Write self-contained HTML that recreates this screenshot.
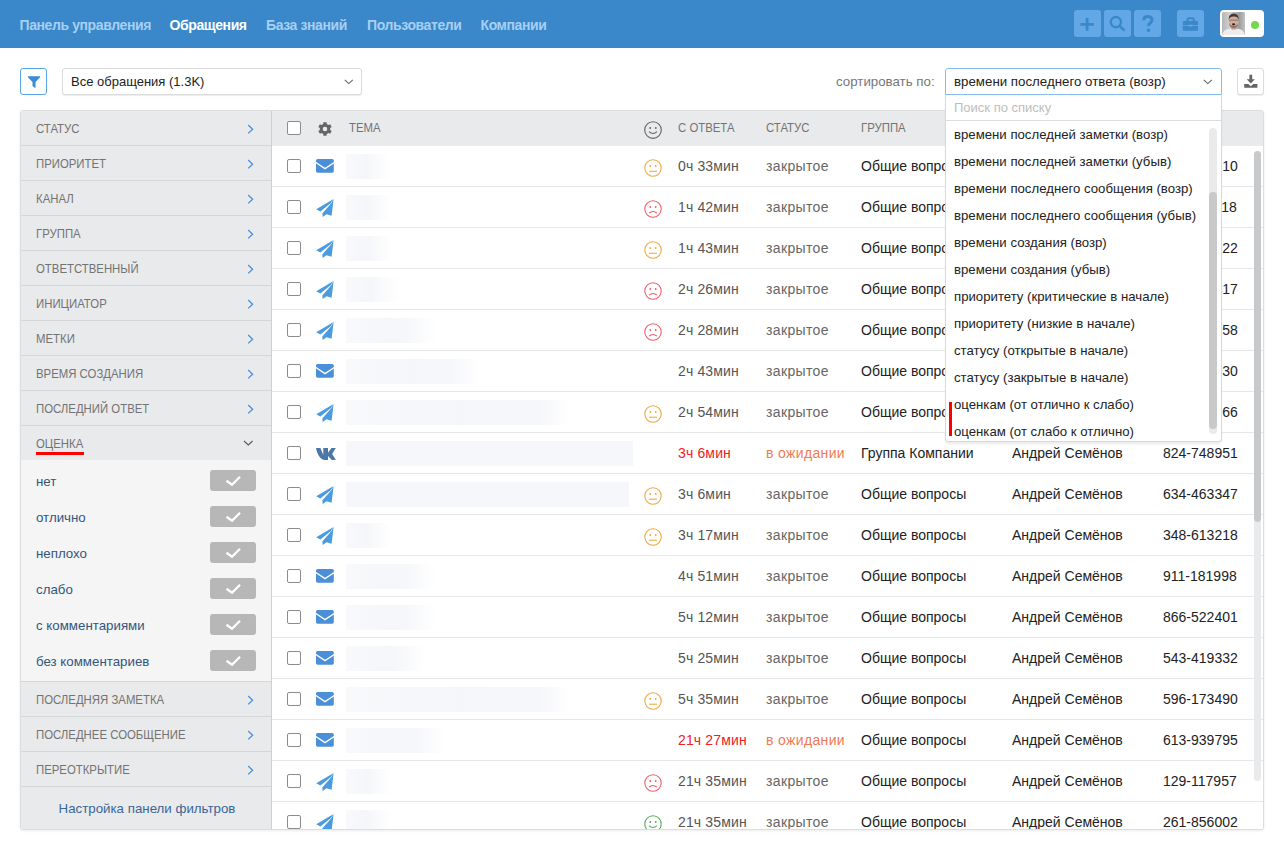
<!DOCTYPE html><html><head><meta charset="utf-8"><style>
*{box-sizing:border-box;margin:0;padding:0}
html,body{width:1284px;height:851px;overflow:hidden;background:#fff;font-family:"Liberation Sans",sans-serif;}
.abs{position:absolute}
svg{position:absolute;display:block;overflow:visible}
#nav{position:absolute;left:0;top:0;width:1284px;height:48px;background:#3a87c9}
#nav .it{position:absolute;top:17px;font-size:14px;font-weight:bold;color:#a6cff3;white-space:nowrap;line-height:16px;letter-spacing:-0.4px}
#nav .it.act{color:#fff}
.nb{position:absolute;top:10px;width:27px;height:27px;background:#63a8e6;border-radius:3px}
.btn{position:absolute;top:68px;height:27px;background:#fff;border:1px solid #dcdcdc;border-radius:3px;box-shadow:0 1px 1px rgba(0,0,0,0.08)}
#panel{position:absolute;left:20px;top:110px;width:1244px;height:720px;border:1px solid #dcdddf;border-radius:3px;box-shadow:0 1px 3px rgba(0,0,0,0.08);overflow:hidden;background:#fff}
#sb{position:absolute;left:0;top:0;width:251px;height:718px;background:#e9eaec;border-right:1px solid #cfd0d2}
.sh{position:absolute;left:0;width:250px;height:35px;border-bottom:1px solid #d5d6d8}
.sh span{position:absolute;left:15px;top:11px;font-size:12.5px;color:#737373;white-space:nowrap;line-height:15px;transform:scaleX(0.91);transform-origin:0 0}
.opt{position:absolute;left:15px;font-size:13.3px;color:#34557b;white-space:nowrap;line-height:15px}
.tg{position:absolute;left:189px;width:46px;height:21px;background:#b7b7b7;border-radius:3px}
#tbl{position:absolute;left:251px;top:0;width:991px;height:718px;overflow:hidden}
.row{position:absolute;left:0;width:991px;height:41px;border-bottom:1px solid #e7e7e7;background:#fff}
.cb{position:absolute;left:15px;top:13px;width:14px;height:14px;border:1px solid #8c8c8c;border-radius:2px;background:#fff}
.c{position:absolute;top:12px;font-size:14px;white-space:nowrap;line-height:16px}
.blur{position:absolute;left:74px;top:8px;height:25px;background:linear-gradient(to right,#f8f9fb 0,#f5f6fa 50%,#f6f7fa calc(100% - 30px),rgba(246,247,250,0) 100%)}
.blur.h{background:#f6f7fa}
.hd{position:absolute;top:10px;font-size:12.5px;color:#737373;white-space:nowrap;line-height:15px;transform:scaleX(0.91);transform-origin:0 0}
#dd{position:absolute;left:945px;top:95px;width:277px;height:347px;background:#fff;border:1px solid #d9d9d9;border-top:none;border-radius:0 0 3px 3px;box-shadow:0 3px 3px -1px rgba(0,0,0,0.09)}
.di{position:absolute;left:8px;font-size:13.2px;color:#222;white-space:nowrap;line-height:15px}
</style></head><body>
<div id="nav">
<div class="it" style="left:19.5px">Панель управления</div>
<div class="it act" style="left:169.5px">Обращения</div>
<div class="it" style="left:266px">База знаний</div>
<div class="it" style="left:367px">Пользователи</div>
<div class="it" style="left:480.5px">Компании</div>
<div class="nb" style="left:1074px"><svg width="27" height="27" viewBox="0 0 27 27"><path d="M6.4 14.3H19.8M13.1 7.8V20.8" stroke="#3a87c9" stroke-width="2.8"/></svg></div>
<div class="nb" style="left:1104px"><svg width="27" height="27" viewBox="0 0 27 27"><circle cx="11.9" cy="12.1" r="5.1" fill="none" stroke="#3a87c9" stroke-width="2.4"/><path d="M15.6 15.9L20.4 20.6" stroke="#3a87c9" stroke-width="2.6"/></svg></div>
<div class="nb" style="left:1134px"><svg width="27" height="27" viewBox="0 0 27 27"><path d="M9.8 10.3C9.8 7.7 11.6 6.5 13.9 6.5C16.4 6.5 18 8 18 9.9C18 12.6 14.8 12.6 14.5 16.2" fill="none" stroke="#3a87c9" stroke-width="3"/><circle cx="14.5" cy="20.2" r="1.8" fill="#3a87c9"/></svg></div>
<div class="nb" style="left:1177px"><svg width="27" height="27" viewBox="0 0 27 27"><path d="M10.5 11V9.2Q10.5 8.2 11.5 8.2H15.8Q16.8 8.2 16.8 9.2V11" fill="none" stroke="#3a87c9" stroke-width="1.9"/><rect x="5.8" y="10.9" width="15.2" height="9.9" rx="1.2" fill="#3a87c9"/><rect x="5.8" y="15.1" width="15.2" height="0.8" fill="#63a8e6"/><rect x="11.8" y="14.6" width="3.6" height="2" fill="#63a8e6"/></svg></div>
<div class="abs" style="left:1220px;top:10px;width:44px;height:27px;background:#fff;border-radius:4px"><svg width="23" height="23" viewBox="0 0 23 23" style="left:2px;top:2px"><defs><linearGradient id="ag" x1="0" x2="1"><stop offset="0" stop-color="#b4b5b7"/><stop offset="0.35" stop-color="#d2d3d5"/><stop offset="0.75" stop-color="#9c9d9f"/><stop offset="1" stop-color="#c2c3c5"/></linearGradient></defs><rect width="23" height="23" rx="1.5" fill="url(#ag)"/><path d="M0.3 23Q0.8 17.8 7 16.8L11.6 17.6L16.2 16.8Q22.2 17.8 22.7 23Z" fill="#ededed"/><rect x="9.6" y="14" width="4" height="3.5" fill="#c49a84"/><ellipse cx="11.6" cy="9.6" rx="4.9" ry="6.3" fill="#d2ae9a"/><path d="M6.6 8.2Q6.4 1.4 11.8 1.4Q17 1.4 16.8 8.2Q16.2 4.3 11.8 4.4Q7.4 4.3 6.6 8.2Z" fill="#4a392f"/><path d="M6.9 11Q7.4 16 11.6 16Q15.8 16 16.3 11Q15.6 13.8 11.6 13.9Q7.8 13.8 6.9 11Z" fill="#8d7061"/><rect x="7" y="7.6" width="9.4" height="1.4" rx="0.7" fill="#6a6a6a" opacity="0.55"/><ellipse cx="11.6" cy="12.3" rx="1.7" ry="1.1" fill="#3a2420"/></svg><div class="abs" style="left:30.8px;top:10.8px;width:8.2px;height:8.2px;border-radius:50%;background:#77d651"></div></div>
</div>
<div class="abs" style="left:20px;top:68px;width:27px;height:27px;border:1px solid #5aa7e8;border-radius:3px;background:#fff"><svg width="27" height="27" viewBox="0 0 27 27" style="left:-1px;top:-1px"><path d="M7.9 8.2H20.1V9.3L15.5 14V20.3L12.5 17.9V14L7.9 9.3Z" fill="#3a8ad6"/></svg></div>
<div class="btn" style="left:62px;width:300px"><div class="abs" style="left:8px;top:5px;font-size:13px;line-height:15px;color:#222;white-space:nowrap">Все обращения (1.3K)</div><svg width="10" height="6" style="left:281px;top:10px"><path d="M0.8 0.8L4.8 4.6L8.8 0.8" fill="none" stroke="#666" stroke-width="1.1"/></svg></div>
<div class="abs" style="left:836px;top:74px;font-size:13.3px;line-height:15px;color:#777;white-space:nowrap">сортировать по:</div>
<div class="btn" style="left:945px;width:277px;border-color:#86bdef;box-shadow:none;border-radius:3px 3px 0 0"><div class="abs" style="left:8px;top:5px;font-size:13.3px;line-height:15px;color:#222;white-space:nowrap">времени последнего ответа (возр)</div><svg width="10" height="6" style="left:257.3px;top:9.6px"><path d="M0.8 0.8L4.8 4.6L8.8 0.8" fill="none" stroke="#666" stroke-width="1.1"/></svg></div>
<div class="btn" style="left:1237px;width:27px"><svg width="27" height="27" viewBox="0 0 27 27" style="left:-1px;top:-1px"><path d="M12.4 6.8H15.2V11.2H17.9L13.8 15.4L9.7 11.2H12.4Z" fill="#666"/><path d="M7.2 15.9H11.3L13.8 18.2L16.3 15.9H20.4V19.8H7.2Z" fill="#666"/></svg></div>
<div id="panel">
<div id="sb">
<div class="sh" style="top:0px"><span>СТАТУС</span><svg width="8" height="11" style="left:226px;top:13px"><path d="M1.2 1L5.6 5.2L1.2 9.4" fill="none" stroke="#4a8fdc" stroke-width="1.3"/></svg></div>
<div class="sh" style="top:35px"><span>ПРИОРИТЕТ</span><svg width="8" height="11" style="left:226px;top:13px"><path d="M1.2 1L5.6 5.2L1.2 9.4" fill="none" stroke="#4a8fdc" stroke-width="1.3"/></svg></div>
<div class="sh" style="top:70px"><span>КАНАЛ</span><svg width="8" height="11" style="left:226px;top:13px"><path d="M1.2 1L5.6 5.2L1.2 9.4" fill="none" stroke="#4a8fdc" stroke-width="1.3"/></svg></div>
<div class="sh" style="top:105px"><span>ГРУППА</span><svg width="8" height="11" style="left:226px;top:13px"><path d="M1.2 1L5.6 5.2L1.2 9.4" fill="none" stroke="#4a8fdc" stroke-width="1.3"/></svg></div>
<div class="sh" style="top:140px"><span>ОТВЕТСТВЕННЫЙ</span><svg width="8" height="11" style="left:226px;top:13px"><path d="M1.2 1L5.6 5.2L1.2 9.4" fill="none" stroke="#4a8fdc" stroke-width="1.3"/></svg></div>
<div class="sh" style="top:175px"><span>ИНИЦИАТОР</span><svg width="8" height="11" style="left:226px;top:13px"><path d="M1.2 1L5.6 5.2L1.2 9.4" fill="none" stroke="#4a8fdc" stroke-width="1.3"/></svg></div>
<div class="sh" style="top:210px"><span>МЕТКИ</span><svg width="8" height="11" style="left:226px;top:13px"><path d="M1.2 1L5.6 5.2L1.2 9.4" fill="none" stroke="#4a8fdc" stroke-width="1.3"/></svg></div>
<div class="sh" style="top:245px"><span>ВРЕМЯ СОЗДАНИЯ</span><svg width="8" height="11" style="left:226px;top:13px"><path d="M1.2 1L5.6 5.2L1.2 9.4" fill="none" stroke="#4a8fdc" stroke-width="1.3"/></svg></div>
<div class="sh" style="top:280px"><span>ПОСЛЕДНИЙ ОТВЕТ</span><svg width="8" height="11" style="left:226px;top:13px"><path d="M1.2 1L5.6 5.2L1.2 9.4" fill="none" stroke="#4a8fdc" stroke-width="1.3"/></svg></div>
<div class="sh" style="top:315px;height:34px;border-bottom:none"><span>ОЦЕНКА</span><svg width="11" height="7" style="left:221.8px;top:13.5px"><path d="M1 1L5.3 5L9.6 1" fill="none" stroke="#5a5a5a" stroke-width="1.1"/></svg></div>
<div class="abs" style="left:15px;top:341px;width:48px;height:3px;background:#fe0000"></div>
<div class="abs" style="left:0;top:349px;width:250px;height:222px;background:#f5f5f6;border-bottom:1px solid #d5d6d8">
<div class="opt" style="top:14px">нет</div>
<div class="tg" style="top:10px"><svg width="46" height="21"><path d="M16.5 10.8L22 14.8L30 6.7" fill="none" stroke="#fff" stroke-width="2.3"/></svg></div>
<div class="opt" style="top:50px">отлично</div>
<div class="tg" style="top:46px"><svg width="46" height="21"><path d="M16.5 10.8L22 14.8L30 6.7" fill="none" stroke="#fff" stroke-width="2.3"/></svg></div>
<div class="opt" style="top:86px">неплохо</div>
<div class="tg" style="top:82px"><svg width="46" height="21"><path d="M16.5 10.8L22 14.8L30 6.7" fill="none" stroke="#fff" stroke-width="2.3"/></svg></div>
<div class="opt" style="top:122px">слабо</div>
<div class="tg" style="top:118px"><svg width="46" height="21"><path d="M16.5 10.8L22 14.8L30 6.7" fill="none" stroke="#fff" stroke-width="2.3"/></svg></div>
<div class="opt" style="top:158px">с комментариями</div>
<div class="tg" style="top:154px"><svg width="46" height="21"><path d="M16.5 10.8L22 14.8L30 6.7" fill="none" stroke="#fff" stroke-width="2.3"/></svg></div>
<div class="opt" style="top:194px">без комментариев</div>
<div class="tg" style="top:190px"><svg width="46" height="21"><path d="M16.5 10.8L22 14.8L30 6.7" fill="none" stroke="#fff" stroke-width="2.3"/></svg></div>
</div>
<div class="sh" style="top:571px"><span>ПОСЛЕДНЯЯ ЗАМЕТКА</span><svg width="8" height="11" style="left:226px;top:13px"><path d="M1.2 1L5.6 5.2L1.2 9.4" fill="none" stroke="#4a8fdc" stroke-width="1.3"/></svg></div>
<div class="sh" style="top:606px"><span>ПОСЛЕДНЕЕ СООБЩЕНИЕ</span><svg width="8" height="11" style="left:226px;top:13px"><path d="M1.2 1L5.6 5.2L1.2 9.4" fill="none" stroke="#4a8fdc" stroke-width="1.3"/></svg></div>
<div class="sh" style="top:641px"><span>ПЕРЕОТКРЫТИЕ</span><svg width="8" height="11" style="left:226px;top:13px"><path d="M1.2 1L5.6 5.2L1.2 9.4" fill="none" stroke="#4a8fdc" stroke-width="1.3"/></svg></div>
<div class="abs" style="left:0;top:690px;left:1px;width:250px;text-align:center;font-size:13.3px;line-height:15px;color:#3b6697;white-space:nowrap">Настройка панели фильтров</div>
</div>
<div id="tbl">
<div class="abs" style="left:0;top:0;width:991px;height:35px;background:#e9eaec">
<div class="cb" style="top:10px"></div>
<svg width="16" height="16" viewBox="0 0 16 16" style="left:45px;top:10px"><path fill="#666" fill-rule="evenodd" d="M5.40 3.50 L6.22 3.12 L6.40 1.18 L9.60 1.18 L9.78 3.12 L10.60 3.50 L11.34 4.01 L13.10 3.21 L14.70 5.97 L13.12 7.10 L13.20 8.00 L13.12 8.90 L14.70 10.03 L13.10 12.79 L11.34 11.99 L10.60 12.50 L9.78 12.88 L9.60 14.82 L6.40 14.82 L6.22 12.88 L5.40 12.50 L4.66 11.99 L2.90 12.79 L1.30 10.03 L2.88 8.90 L2.80 8.00 L2.88 7.10 L1.30 5.97 L2.90 3.21 L4.66 4.01ZM10.30 8.00A2.3 2.3 0 1 0 5.70 8.00A2.3 2.3 0 1 0 10.30 8.00Z"/></svg>
<div class="hd" style="left:77px">ТЕМА</div>
<svg width="20" height="20" viewBox="0 0 20 20" style="left:371px;top:8.5px"><circle cx="10" cy="10" r="8.3" fill="none" stroke="#666" stroke-width="1.15"/><circle cx="7.2" cy="8" r="0.95" fill="#666"/><circle cx="12.8" cy="8" r="0.95" fill="#666"/><path d="M6 11.6Q10 15.4 14 11.6" fill="none" stroke="#666" stroke-width="1.15"/></svg>
<div class="hd" style="left:406px">С ОТВЕТА</div>
<div class="hd" style="left:494px">СТАТУС</div>
<div class="hd" style="left:589px">ГРУППА</div>
</div>
<div class="row" style="top:35px"><div class="cb"></div><svg width="18" height="14" viewBox="0 0 18 14" style="left:44.2px;top:13.2px"><rect x="0" y="0" width="17.8" height="13.7" rx="1.6" fill="#4a8fd8"/><path d="M-0.5 3.3L9 9.6L18.3 3.5" fill="none" stroke="#fff" stroke-width="1.3"/></svg><div class="blur" style="width:44px"></div><svg width="20" height="20" viewBox="0 0 20 20" style="left:371px;top:12px"><circle cx="10" cy="10" r="8.2" fill="none" stroke="#eea53a" stroke-width="1.05"/><circle cx="7.3" cy="8" r="0.9" fill="#eea53a"/><circle cx="12.7" cy="8" r="0.9" fill="#eea53a"/><path d="M6 13.2H14" stroke="#eea53a" stroke-width="1.05"/></svg><div class="c" style="left:406px;color:#555;letter-spacing:0.15px">0ч 33мин</div><div class="c" style="left:494px;color:#666;letter-spacing:0.35px">закрытое</div><div class="c" style="left:589px;color:#222">Общие вопросы</div><div class="c" style="left:740px;color:#222">Андрей Семёнов</div><div class="c" style="left:891px;color:#222">514-327510</div></div>
<div class="row" style="top:76px"><div class="cb"></div><svg width="20" height="20" viewBox="0 0 20 20" style="left:42px;top:11px"><path d="M19.6 1L2.2 11.3L6.3 13.6L16.6 5.2Z" fill="#4b9be0"/><path d="M19.6 1L17.3 5.2L8.3 15.4L8.7 18.9L12.5 16.3L17.6 17.7Z" fill="#4b9be0"/></svg><div class="blur" style="width:46px"></div><svg width="20" height="20" viewBox="0 0 20 20" style="left:371px;top:12px"><circle cx="10" cy="10" r="8.2" fill="none" stroke="#ef5a66" stroke-width="1.05"/><circle cx="7.3" cy="8" r="0.9" fill="#ef5a66"/><circle cx="12.7" cy="8" r="0.9" fill="#ef5a66"/><path d="M6 14.2Q10 10.8 14 14.2" fill="none" stroke="#ef5a66" stroke-width="1.05"/></svg><div class="c" style="left:406px;color:#555;letter-spacing:0.15px">1ч 42мин</div><div class="c" style="left:494px;color:#666;letter-spacing:0.35px">закрытое</div><div class="c" style="left:589px;color:#222">Общие вопросы</div><div class="c" style="left:740px;color:#222">Андрей Семёнов</div><div class="c" style="left:891px;color:#222">372-904118</div></div>
<div class="row" style="top:117px"><div class="cb"></div><svg width="20" height="20" viewBox="0 0 20 20" style="left:42px;top:11px"><path d="M19.6 1L2.2 11.3L6.3 13.6L16.6 5.2Z" fill="#4b9be0"/><path d="M19.6 1L17.3 5.2L8.3 15.4L8.7 18.9L12.5 16.3L17.6 17.7Z" fill="#4b9be0"/></svg><div class="blur" style="width:47px"></div><svg width="20" height="20" viewBox="0 0 20 20" style="left:371px;top:12px"><circle cx="10" cy="10" r="8.2" fill="none" stroke="#eea53a" stroke-width="1.05"/><circle cx="7.3" cy="8" r="0.9" fill="#eea53a"/><circle cx="12.7" cy="8" r="0.9" fill="#eea53a"/><path d="M6 13.2H14" stroke="#eea53a" stroke-width="1.05"/></svg><div class="c" style="left:406px;color:#555;letter-spacing:0.15px">1ч 43мин</div><div class="c" style="left:494px;color:#666;letter-spacing:0.35px">закрытое</div><div class="c" style="left:589px;color:#222">Общие вопросы</div><div class="c" style="left:740px;color:#222">Андрей Семёнов</div><div class="c" style="left:891px;color:#222">245-668322</div></div>
<div class="row" style="top:158px"><div class="cb"></div><svg width="20" height="20" viewBox="0 0 20 20" style="left:42px;top:11px"><path d="M19.6 1L2.2 11.3L6.3 13.6L16.6 5.2Z" fill="#4b9be0"/><path d="M19.6 1L17.3 5.2L8.3 15.4L8.7 18.9L12.5 16.3L17.6 17.7Z" fill="#4b9be0"/></svg><div class="blur" style="width:53px"></div><svg width="20" height="20" viewBox="0 0 20 20" style="left:371px;top:12px"><circle cx="10" cy="10" r="8.2" fill="none" stroke="#ef5a66" stroke-width="1.05"/><circle cx="7.3" cy="8" r="0.9" fill="#ef5a66"/><circle cx="12.7" cy="8" r="0.9" fill="#ef5a66"/><path d="M6 14.2Q10 10.8 14 14.2" fill="none" stroke="#ef5a66" stroke-width="1.05"/></svg><div class="c" style="left:406px;color:#555;letter-spacing:0.15px">2ч 26мин</div><div class="c" style="left:494px;color:#666;letter-spacing:0.35px">закрытое</div><div class="c" style="left:589px;color:#222">Общие вопросы</div><div class="c" style="left:740px;color:#222">Андрей Семёнов</div><div class="c" style="left:891px;color:#222">683-120417</div></div>
<div class="row" style="top:199px"><div class="cb"></div><svg width="20" height="20" viewBox="0 0 20 20" style="left:42px;top:11px"><path d="M19.6 1L2.2 11.3L6.3 13.6L16.6 5.2Z" fill="#4b9be0"/><path d="M19.6 1L17.3 5.2L8.3 15.4L8.7 18.9L12.5 16.3L17.6 17.7Z" fill="#4b9be0"/></svg><div class="blur" style="width:90px"></div><svg width="20" height="20" viewBox="0 0 20 20" style="left:371px;top:12px"><circle cx="10" cy="10" r="8.2" fill="none" stroke="#ef5a66" stroke-width="1.05"/><circle cx="7.3" cy="8" r="0.9" fill="#ef5a66"/><circle cx="12.7" cy="8" r="0.9" fill="#ef5a66"/><path d="M6 14.2Q10 10.8 14 14.2" fill="none" stroke="#ef5a66" stroke-width="1.05"/></svg><div class="c" style="left:406px;color:#555;letter-spacing:0.15px">2ч 28мин</div><div class="c" style="left:494px;color:#666;letter-spacing:0.35px">закрытое</div><div class="c" style="left:589px;color:#222">Общие вопросы</div><div class="c" style="left:740px;color:#222">Андрей Семёнов</div><div class="c" style="left:891px;color:#222">901-554758</div></div>
<div class="row" style="top:240px"><div class="cb"></div><svg width="18" height="14" viewBox="0 0 18 14" style="left:44.2px;top:13.2px"><rect x="0" y="0" width="17.8" height="13.7" rx="1.6" fill="#4a8fd8"/><path d="M-0.5 3.3L9 9.6L18.3 3.5" fill="none" stroke="#fff" stroke-width="1.3"/></svg><div class="blur" style="width:135px"></div><div class="c" style="left:406px;color:#555;letter-spacing:0.15px">2ч 43мин</div><div class="c" style="left:494px;color:#666;letter-spacing:0.35px">закрытое</div><div class="c" style="left:589px;color:#222">Общие вопросы</div><div class="c" style="left:740px;color:#222">Андрей Семёнов</div><div class="c" style="left:891px;color:#222">437-281930</div></div>
<div class="row" style="top:281px"><div class="cb"></div><svg width="20" height="20" viewBox="0 0 20 20" style="left:42px;top:11px"><path d="M19.6 1L2.2 11.3L6.3 13.6L16.6 5.2Z" fill="#4b9be0"/><path d="M19.6 1L17.3 5.2L8.3 15.4L8.7 18.9L12.5 16.3L17.6 17.7Z" fill="#4b9be0"/></svg><div class="blur" style="width:224px"></div><svg width="20" height="20" viewBox="0 0 20 20" style="left:371px;top:12px"><circle cx="10" cy="10" r="8.2" fill="none" stroke="#eea53a" stroke-width="1.05"/><circle cx="7.3" cy="8" r="0.9" fill="#eea53a"/><circle cx="12.7" cy="8" r="0.9" fill="#eea53a"/><path d="M6 13.2H14" stroke="#eea53a" stroke-width="1.05"/></svg><div class="c" style="left:406px;color:#555;letter-spacing:0.15px">2ч 54мин</div><div class="c" style="left:494px;color:#666;letter-spacing:0.35px">закрытое</div><div class="c" style="left:589px;color:#222">Общие вопросы</div><div class="c" style="left:740px;color:#222">Андрей Семёнов</div><div class="c" style="left:891px;color:#222">819-036266</div></div>
<div class="row" style="top:322px"><div class="cb"></div><svg width="21" height="13" viewBox="0 0 21 13" style="left:44.2px;top:14.9px"><path fill="#4a76a8" d="M0 0H4.4L7.3 6.9V0H12V4.8L15.5 0H19.8L16.1 6.1L19.9 12H15.9L12 8V12H8.9C4.7 12 1.3 6.6 0 0Z"/></svg><div class="blur h" style="width:287px"></div><div class="c" style="left:406px;color:#f0201e;letter-spacing:0.15px">3ч 6мин</div><div class="c" style="left:494px;color:#f07a52;letter-spacing:0.35px">в ожидании</div><div class="c" style="left:589px;color:#222">Группа Компании</div><div class="c" style="left:740px;color:#222">Андрей Семёнов</div><div class="c" style="left:891px;color:#222">824-748951</div></div>
<div class="row" style="top:363px"><div class="cb"></div><svg width="20" height="20" viewBox="0 0 20 20" style="left:42px;top:11px"><path d="M19.6 1L2.2 11.3L6.3 13.6L16.6 5.2Z" fill="#4b9be0"/><path d="M19.6 1L17.3 5.2L8.3 15.4L8.7 18.9L12.5 16.3L17.6 17.7Z" fill="#4b9be0"/></svg><div class="blur h" style="width:283px"></div><svg width="20" height="20" viewBox="0 0 20 20" style="left:371px;top:12px"><circle cx="10" cy="10" r="8.2" fill="none" stroke="#eea53a" stroke-width="1.05"/><circle cx="7.3" cy="8" r="0.9" fill="#eea53a"/><circle cx="12.7" cy="8" r="0.9" fill="#eea53a"/><path d="M6 13.2H14" stroke="#eea53a" stroke-width="1.05"/></svg><div class="c" style="left:406px;color:#555;letter-spacing:0.15px">3ч 6мин</div><div class="c" style="left:494px;color:#666;letter-spacing:0.35px">закрытое</div><div class="c" style="left:589px;color:#222">Общие вопросы</div><div class="c" style="left:740px;color:#222">Андрей Семёнов</div><div class="c" style="left:891px;color:#222">634-463347</div></div>
<div class="row" style="top:404px"><div class="cb"></div><svg width="20" height="20" viewBox="0 0 20 20" style="left:42px;top:11px"><path d="M19.6 1L2.2 11.3L6.3 13.6L16.6 5.2Z" fill="#4b9be0"/><path d="M19.6 1L17.3 5.2L8.3 15.4L8.7 18.9L12.5 16.3L17.6 17.7Z" fill="#4b9be0"/></svg><div class="blur" style="width:44px"></div><svg width="20" height="20" viewBox="0 0 20 20" style="left:371px;top:12px"><circle cx="10" cy="10" r="8.2" fill="none" stroke="#eea53a" stroke-width="1.05"/><circle cx="7.3" cy="8" r="0.9" fill="#eea53a"/><circle cx="12.7" cy="8" r="0.9" fill="#eea53a"/><path d="M6 13.2H14" stroke="#eea53a" stroke-width="1.05"/></svg><div class="c" style="left:406px;color:#555;letter-spacing:0.15px">3ч 17мин</div><div class="c" style="left:494px;color:#666;letter-spacing:0.35px">закрытое</div><div class="c" style="left:589px;color:#222">Общие вопросы</div><div class="c" style="left:740px;color:#222">Андрей Семёнов</div><div class="c" style="left:891px;color:#222">348-613218</div></div>
<div class="row" style="top:445px"><div class="cb"></div><svg width="18" height="14" viewBox="0 0 18 14" style="left:44.2px;top:13.2px"><rect x="0" y="0" width="17.8" height="13.7" rx="1.6" fill="#4a8fd8"/><path d="M-0.5 3.3L9 9.6L18.3 3.5" fill="none" stroke="#fff" stroke-width="1.3"/></svg><div class="blur" style="width:90px"></div><div class="c" style="left:406px;color:#555;letter-spacing:0.15px">4ч 51мин</div><div class="c" style="left:494px;color:#666;letter-spacing:0.35px">закрытое</div><div class="c" style="left:589px;color:#222">Общие вопросы</div><div class="c" style="left:740px;color:#222">Андрей Семёнов</div><div class="c" style="left:891px;color:#222">911-181998</div></div>
<div class="row" style="top:486px"><div class="cb"></div><svg width="18" height="14" viewBox="0 0 18 14" style="left:44.2px;top:13.2px"><rect x="0" y="0" width="17.8" height="13.7" rx="1.6" fill="#4a8fd8"/><path d="M-0.5 3.3L9 9.6L18.3 3.5" fill="none" stroke="#fff" stroke-width="1.3"/></svg><div class="blur" style="width:90px"></div><div class="c" style="left:406px;color:#555;letter-spacing:0.15px">5ч 12мин</div><div class="c" style="left:494px;color:#666;letter-spacing:0.35px">закрытое</div><div class="c" style="left:589px;color:#222">Общие вопросы</div><div class="c" style="left:740px;color:#222">Андрей Семёнов</div><div class="c" style="left:891px;color:#222">866-522401</div></div>
<div class="row" style="top:527px"><div class="cb"></div><svg width="18" height="14" viewBox="0 0 18 14" style="left:44.2px;top:13.2px"><rect x="0" y="0" width="17.8" height="13.7" rx="1.6" fill="#4a8fd8"/><path d="M-0.5 3.3L9 9.6L18.3 3.5" fill="none" stroke="#fff" stroke-width="1.3"/></svg><div class="blur" style="width:80px"></div><div class="c" style="left:406px;color:#555;letter-spacing:0.15px">5ч 25мин</div><div class="c" style="left:494px;color:#666;letter-spacing:0.35px">закрытое</div><div class="c" style="left:589px;color:#222">Общие вопросы</div><div class="c" style="left:740px;color:#222">Андрей Семёнов</div><div class="c" style="left:891px;color:#222">543-419332</div></div>
<div class="row" style="top:568px"><div class="cb"></div><svg width="18" height="14" viewBox="0 0 18 14" style="left:44.2px;top:13.2px"><rect x="0" y="0" width="17.8" height="13.7" rx="1.6" fill="#4a8fd8"/><path d="M-0.5 3.3L9 9.6L18.3 3.5" fill="none" stroke="#fff" stroke-width="1.3"/></svg><div class="blur" style="width:224px"></div><svg width="20" height="20" viewBox="0 0 20 20" style="left:371px;top:12px"><circle cx="10" cy="10" r="8.2" fill="none" stroke="#eea53a" stroke-width="1.05"/><circle cx="7.3" cy="8" r="0.9" fill="#eea53a"/><circle cx="12.7" cy="8" r="0.9" fill="#eea53a"/><path d="M6 13.2H14" stroke="#eea53a" stroke-width="1.05"/></svg><div class="c" style="left:406px;color:#555;letter-spacing:0.15px">5ч 35мин</div><div class="c" style="left:494px;color:#666;letter-spacing:0.35px">закрытое</div><div class="c" style="left:589px;color:#222">Общие вопросы</div><div class="c" style="left:740px;color:#222">Андрей Семёнов</div><div class="c" style="left:891px;color:#222">596-173490</div></div>
<div class="row" style="top:609px"><div class="cb"></div><svg width="18" height="14" viewBox="0 0 18 14" style="left:44.2px;top:13.2px"><rect x="0" y="0" width="17.8" height="13.7" rx="1.6" fill="#4a8fd8"/><path d="M-0.5 3.3L9 9.6L18.3 3.5" fill="none" stroke="#fff" stroke-width="1.3"/></svg><div class="blur" style="width:100px"></div><div class="c" style="left:406px;color:#f0201e;letter-spacing:0.15px">21ч 27мин</div><div class="c" style="left:494px;color:#f07a52;letter-spacing:0.35px">в ожидании</div><div class="c" style="left:589px;color:#222">Общие вопросы</div><div class="c" style="left:740px;color:#222">Андрей Семёнов</div><div class="c" style="left:891px;color:#222">613-939795</div></div>
<div class="row" style="top:650px"><div class="cb"></div><svg width="20" height="20" viewBox="0 0 20 20" style="left:42px;top:11px"><path d="M19.6 1L2.2 11.3L6.3 13.6L16.6 5.2Z" fill="#4b9be0"/><path d="M19.6 1L17.3 5.2L8.3 15.4L8.7 18.9L12.5 16.3L17.6 17.7Z" fill="#4b9be0"/></svg><div class="blur" style="width:45px"></div><svg width="20" height="20" viewBox="0 0 20 20" style="left:371px;top:12px"><circle cx="10" cy="10" r="8.2" fill="none" stroke="#ef5a66" stroke-width="1.05"/><circle cx="7.3" cy="8" r="0.9" fill="#ef5a66"/><circle cx="12.7" cy="8" r="0.9" fill="#ef5a66"/><path d="M6 14.2Q10 10.8 14 14.2" fill="none" stroke="#ef5a66" stroke-width="1.05"/></svg><div class="c" style="left:406px;color:#555;letter-spacing:0.15px">21ч 35мин</div><div class="c" style="left:494px;color:#666;letter-spacing:0.35px">закрытое</div><div class="c" style="left:589px;color:#222">Общие вопросы</div><div class="c" style="left:740px;color:#222">Андрей Семёнов</div><div class="c" style="left:891px;color:#222">129-117957</div></div>
<div class="row" style="top:691px"><div class="cb"></div><svg width="20" height="20" viewBox="0 0 20 20" style="left:42px;top:11px"><path d="M19.6 1L2.2 11.3L6.3 13.6L16.6 5.2Z" fill="#4b9be0"/><path d="M19.6 1L17.3 5.2L8.3 15.4L8.7 18.9L12.5 16.3L17.6 17.7Z" fill="#4b9be0"/></svg><div class="blur" style="width:45px"></div><svg width="20" height="20" viewBox="0 0 20 20" style="left:371px;top:12px"><circle cx="10" cy="10" r="8.2" fill="none" stroke="#58a85c" stroke-width="1.05"/><circle cx="7.3" cy="8" r="0.9" fill="#58a85c"/><circle cx="12.7" cy="8" r="0.9" fill="#58a85c"/><path d="M6 11.6Q10 15.4 14 11.6" fill="none" stroke="#58a85c" stroke-width="1.05"/></svg><div class="c" style="left:406px;color:#555;letter-spacing:0.15px">21ч 35мин</div><div class="c" style="left:494px;color:#666;letter-spacing:0.35px">закрытое</div><div class="c" style="left:589px;color:#222">Общие вопросы</div><div class="c" style="left:740px;color:#222">Андрей Семёнов</div><div class="c" style="left:891px;color:#222">261-856002</div></div>
<div class="abs" style="left:982px;top:40px;width:7px;height:630px;background:#e9eaec;border-radius:4px"></div>
<div class="abs" style="left:982px;top:40px;width:7px;height:371px;background:#c8c9cb;border-radius:4px"></div>
</div>
</div>
<div id="dd">
<div class="abs" style="left:8px;top:5px;font-size:13px;line-height:15px;color:#bdbdbd;white-space:nowrap">Поиск по списку</div>
<div class="abs" style="left:0;top:25px;width:275px;height:1px;background:#dedede"></div>
<div class="di" style="top:32px">времени последней заметки (возр)</div>
<div class="di" style="top:59px">времени последней заметки (убыв)</div>
<div class="di" style="top:86px">времени последнего сообщения (возр)</div>
<div class="di" style="top:113px">времени последнего сообщения (убыв)</div>
<div class="di" style="top:140px">времени создания (возр)</div>
<div class="di" style="top:167px">времени создания (убыв)</div>
<div class="di" style="top:194px">приоритету (критические в начале)</div>
<div class="di" style="top:221px">приоритету (низкие в начале)</div>
<div class="di" style="top:248px">статусу (открытые в начале)</div>
<div class="di" style="top:275px">статусу (закрытые в начале)</div>
<div class="di" style="top:302px">оценкам (от отлично к слабо)</div>
<div class="di" style="top:329px">оценкам (от слабо к отлично)</div>
<div class="abs" style="left:263px;top:33px;width:8px;height:306px;background:#e9eaec;border-radius:4px"></div>
<div class="abs" style="left:263px;top:97px;width:8px;height:237px;background:#c8c9cb;border-radius:4px"></div>
<div class="abs" style="left:3px;top:307px;width:3px;height:34px;background:#fe0000"></div>
</div>
</body></html>
